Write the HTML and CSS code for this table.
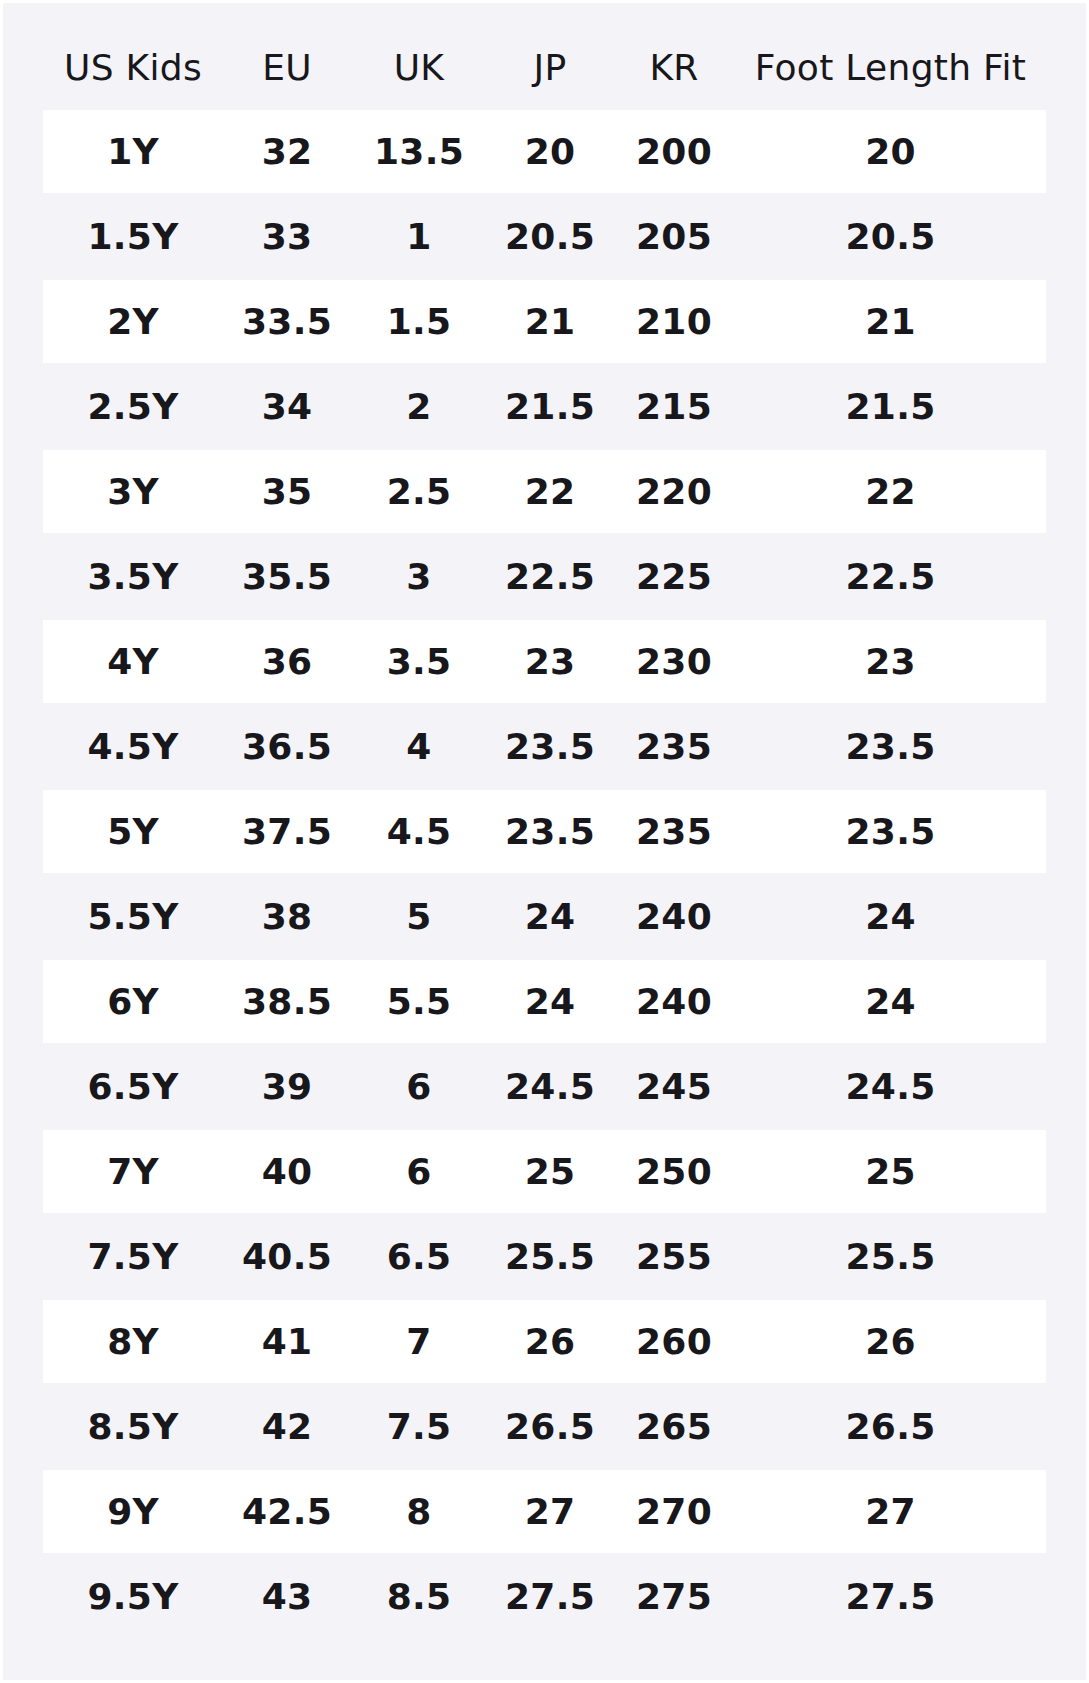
FILE: index.html
```html
<!DOCTYPE html>
<html lang="en">
<head>
<meta charset="utf-8">
<title>US Kids Size Chart</title>
<link rel="stylesheet" href="styles.css">
</head>
<body>
<div class="panel">
  <table class="chart">
    <colgroup>
      <col class="c-us"><col class="c-eu"><col class="c-uk"><col class="c-jp"><col class="c-kr"><col class="c-fit">
    </colgroup>
    <thead>
      <tr><th>US Kids</th><th>EU</th><th>UK</th><th>JP</th><th>KR</th><th>Foot Length Fit</th></tr>
    </thead>
    <tbody>
      <tr><td>1Y</td><td>32</td><td>13.5</td><td>20</td><td>200</td><td>20</td></tr>
      <tr><td>1.5Y</td><td>33</td><td>1</td><td>20.5</td><td>205</td><td>20.5</td></tr>
      <tr><td>2Y</td><td>33.5</td><td>1.5</td><td>21</td><td>210</td><td>21</td></tr>
      <tr><td>2.5Y</td><td>34</td><td>2</td><td>21.5</td><td>215</td><td>21.5</td></tr>
      <tr><td>3Y</td><td>35</td><td>2.5</td><td>22</td><td>220</td><td>22</td></tr>
      <tr><td>3.5Y</td><td>35.5</td><td>3</td><td>22.5</td><td>225</td><td>22.5</td></tr>
      <tr><td>4Y</td><td>36</td><td>3.5</td><td>23</td><td>230</td><td>23</td></tr>
      <tr><td>4.5Y</td><td>36.5</td><td>4</td><td>23.5</td><td>235</td><td>23.5</td></tr>
      <tr><td>5Y</td><td>37.5</td><td>4.5</td><td>23.5</td><td>235</td><td>23.5</td></tr>
      <tr><td>5.5Y</td><td>38</td><td>5</td><td>24</td><td>240</td><td>24</td></tr>
      <tr><td>6Y</td><td>38.5</td><td>5.5</td><td>24</td><td>240</td><td>24</td></tr>
      <tr><td>6.5Y</td><td>39</td><td>6</td><td>24.5</td><td>245</td><td>24.5</td></tr>
      <tr><td>7Y</td><td>40</td><td>6</td><td>25</td><td>250</td><td>25</td></tr>
      <tr><td>7.5Y</td><td>40.5</td><td>6.5</td><td>25.5</td><td>255</td><td>25.5</td></tr>
      <tr><td>8Y</td><td>41</td><td>7</td><td>26</td><td>260</td><td>26</td></tr>
      <tr><td>8.5Y</td><td>42</td><td>7.5</td><td>26.5</td><td>265</td><td>26.5</td></tr>
      <tr><td>9Y</td><td>42.5</td><td>8</td><td>27</td><td>270</td><td>27</td></tr>
      <tr><td>9.5Y</td><td>43</td><td>8.5</td><td>27.5</td><td>275</td><td>27.5</td></tr>
    </tbody>
  </table>
</div>
</body>
</html>
```
FILE: styles.css
```css
html, body {
  background: #ffffff;
}
body {
  margin: 3px;
  font-family: "DejaVu Sans", "Noto Sans", sans-serif;
  color: #17171c;
}
.panel {
  background: #f4f4f8;
  padding: 40px 40px 40px 40px;
}
.chart {
  width: 1003px;
  table-layout: fixed;
  border-collapse: separate;
  border-spacing: 0 2px;
  font-size: 36px;
  line-height: 42px;
}
.c-us { width: 180px; }
.c-eu { width: 128px; }
.c-uk { width: 136px; }
.c-jp { width: 126px; }
.c-kr { width: 122px; }
.c-fit { width: 311px; }
.chart th {
  font-weight: normal;
  text-align: center;
  padding: 2px 0 19px;
  white-space: nowrap;
  letter-spacing: 0.3px;
}
.chart td {
  font-weight: bold;
  text-align: center;
  vertical-align: middle;
  height: 83px;
  padding: 0;
  white-space: nowrap;
  letter-spacing: 0.3px;
}
.chart tbody tr:nth-child(odd) td {
  background: #ffffff;
}
```
